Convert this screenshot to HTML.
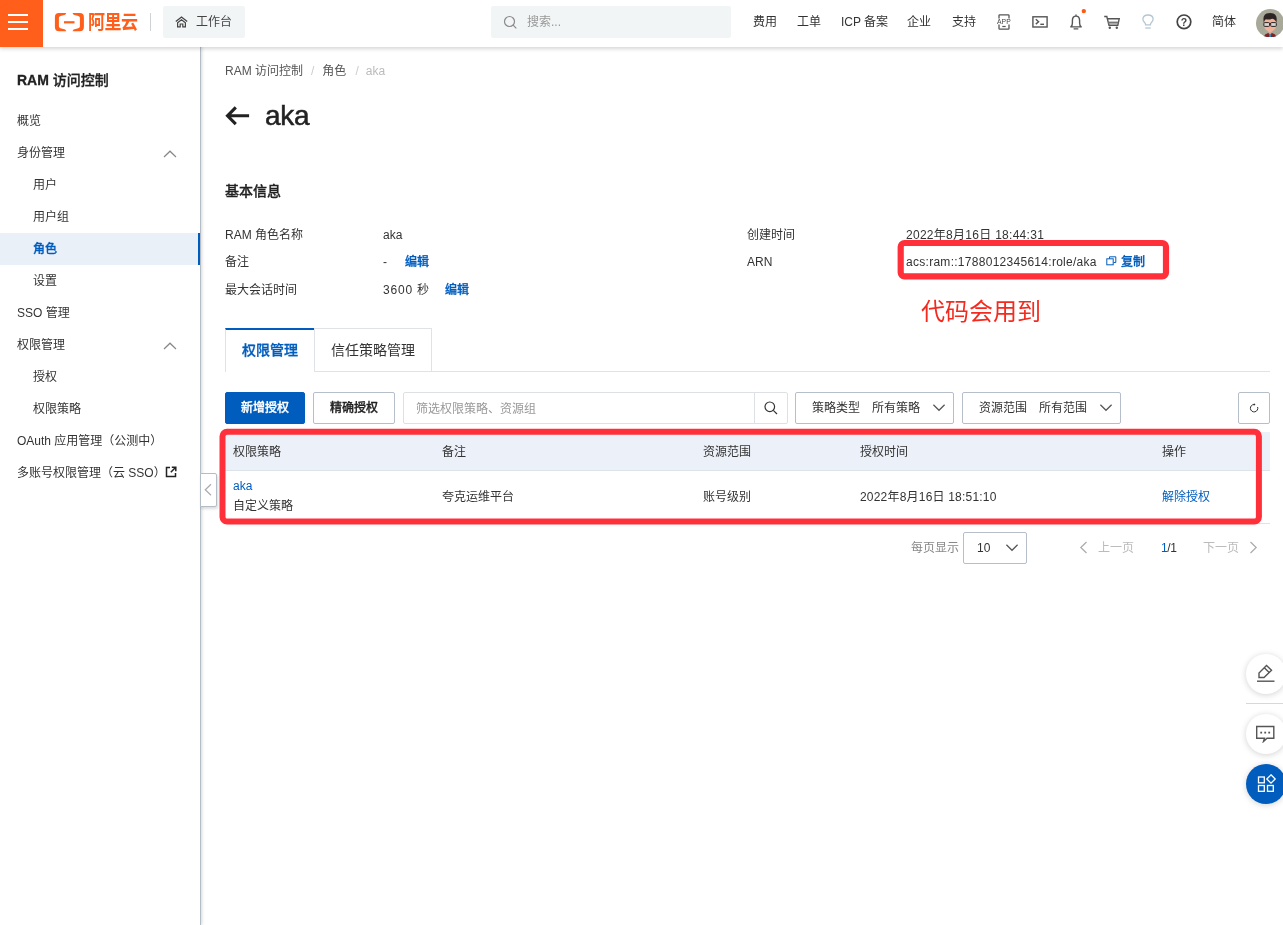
<!DOCTYPE html>
<html lang="zh-CN">
<head>
<meta charset="utf-8">
<title>RAM 访问控制</title>
<style>
*{box-sizing:border-box;margin:0;padding:0}
html,body{width:1283px;height:925px;overflow:hidden;background:#fff}
body{font-family:"Liberation Sans","Noto Sans CJK SC",sans-serif;font-size:12px;color:#333;position:relative}
#wrap{position:absolute;left:0;top:0;width:1283px;height:925px;overflow:hidden;will-change:transform}
.abs{position:absolute;white-space:nowrap}
/* header */
#hdr{position:absolute;left:0;top:0;width:1283px;height:47px;background:#fff;box-shadow:0 2px 4px rgba(0,0,0,.16);z-index:10}
#ham{position:absolute;left:0;top:0;width:43px;height:47px;background:#ff5f1b}
#ham i{position:absolute;left:8px;width:20px;height:2px;background:#fff}
.nav{position:absolute;top:0;height:46px;line-height:44px;font-size:12px;color:#333;white-space:nowrap}
/* sidebar */
#side{position:absolute;left:0;top:46px;width:201px;height:879px;background:#fff;border-right:1px solid #b4bcc5;box-shadow:1px 0 3px rgba(0,0,0,.16)}
#side .t{position:absolute;left:17px;top:24px;font-size:14px;font-weight:500;-webkit-text-stroke:.3px;color:#222;line-height:20px}
#side .m{position:absolute;left:0;width:200px;height:32px;line-height:32px;font-size:12px;color:#333;padding-left:17px;white-space:nowrap}
#side .m.s{padding-left:33px}
#side .m.a{background:#eaf0f8;color:#005dbd;font-weight:500;-webkit-text-stroke:.3px;border-right:2px solid #005dbd}
/* content */
a,.lk{color:#005dbd;text-decoration:none}
.btn{position:absolute;height:32px;line-height:31px;border:1px solid #b6bec9;border-radius:2px;background:#fff;font-size:12px;color:#333;text-align:center;white-space:nowrap}
</style>
</head>
<body>
<div id="wrap">
<div id="hdr">
<div id="ham"><i style="top:14px"></i><i style="top:21px"></i><i style="top:28px"></i></div>
<svg class="abs" style="left:54px;top:13px" width="31" height="19" viewBox="0 0 31 19"><path fill="#ff5f1b" d="M12.300 0H5Q0.900 0 0.900 4.200V14.100Q0.900 18.300 5 18.300H12.300L11.200 16.500L6.500 15.200Q4.900 14.800 4.900 13.500V4.800Q4.900 3.500 6.500 3.100L11.200 1.800Z"/><path fill="#ff5f1b" d="M18.500 0H25.800Q29.900 0 29.900 4.200V14.100Q29.900 18.300 25.800 18.300H18.500L19.600 16.500L24.300 15.200Q25.900 14.800 25.900 13.500V4.800Q25.900 3.500 24.300 3.100L19.600 1.800Z"/><rect x="10" y="8.200" width="10.500" height="2.200" fill="#ff5f1b"/></svg>
<div class="abs" style="left:88px;top:11px;font-size:17px;line-height:24px;font-weight:bold;color:#ff5f1b;letter-spacing:-0.5px;transform:scaleY(1.12);transform-origin:0 50%">阿里云</div>
<div class="abs" style="left:150px;top:13px;width:1px;height:18px;background:#d0d3d6"></div>
<div class="abs" style="left:163px;top:6px;width:82px;height:32px;background:#f2f5f6;border-radius:2px"></div>
<svg class="abs" style="left:175px;top:16px" width="13" height="12" viewBox="0 0 13 12"><path d="M0.800 5.600L6.500 1l5.700 4.600" fill="none" stroke="#444" stroke-width="1.300"/><path d="M2.600 6.800L6.500 3.700l3.900 3.100V10.800H7.800V8H5.200v2.800H2.600z" fill="none" stroke="#444" stroke-width="1.200"/></svg>
<div class="nav" style="left:196px;color:#444">工作台</div>
<div class="abs" style="left:491px;top:6px;width:240px;height:32px;background:#f2f5f6;border-radius:2px"></div>
<svg class="abs" style="left:503px;top:15px" width="15" height="15" viewBox="0 0 15 15"><circle cx="6.500" cy="6.500" r="5" fill="none" stroke="#8a8a8a" stroke-width="1.200"/><path d="M10.200 10.200L13.300 13.300" stroke="#8a8a8a" stroke-width="1.200"/></svg>
<div class="nav" style="left:527px;color:#999">搜索...</div>
<div class="nav" style="left:753px">费用</div>
<div class="nav" style="left:797px">工单</div>
<div class="nav" style="left:841px">ICP 备案</div>
<div class="nav" style="left:907px">企业</div>
<div class="nav" style="left:952px">支持</div>
<svg class="abs" style="left:995px;top:13px" width="18" height="18" viewBox="0 0 18 18"><path d="M4 5.500V2.600Q4 1.800 4.800 1.800H13.200Q14 1.800 14 2.600V5.500M14 11.500V15.400Q14 16.200 13.200 16.200H4.800Q4 16.200 4 15.400V11.500" fill="none" stroke="#555" stroke-width="1.300"/><path d="M7.300 13.500H10.700" stroke="#555" stroke-width="1.200"/><text x="9" y="11.300" font-family="Liberation Sans,sans-serif" font-size="6.800" fill="#444" text-anchor="middle" letter-spacing="0.200">APP</text></svg>
<svg class="abs" style="left:1031px;top:15px" width="18" height="14" viewBox="0 0 18 14"><rect x="1.900" y="1.800" width="14.200" height="10.200" fill="none" stroke="#555" stroke-width="1.400"/><path d="M4.800 4.300L7.600 6.700L4.800 9.100" fill="none" stroke="#555" stroke-width="1.400"/><path d="M9.300 9.300H13" stroke="#555" stroke-width="1.400"/></svg>
<svg class="abs" style="left:1069px;top:8px" width="19" height="23" viewBox="0 0 19 23"><path d="M7 6.400V8M1.200 18.900H12.800M1.900 18.900Q3.400 17.600 3.400 15V12.600Q3.400 8.100 7 8.100Q10.600 8.100 10.600 12.600V15Q10.600 17.600 12.100 18.900M4.600 20.900H9.300" fill="none" stroke="#555" stroke-width="1.400"/><circle cx="14.800" cy="3.100" r="2.200" fill="#ff5a14"/></svg>
<svg class="abs" style="left:1103px;top:14px" width="18" height="16" viewBox="0 0 18 16"><path d="M1.200 2.500H3.800L6 11.300H14.800L16.200 4.800H4.500" fill="none" stroke="#555" stroke-width="1.400"/><path d="M5.200 8.600H15.300" stroke="#777" stroke-width="2"/><circle cx="6.800" cy="13.800" r="1.200" fill="#555"/><circle cx="13.800" cy="13.800" r="1.200" fill="#555"/></svg>
<svg class="abs" style="left:1141px;top:13px" width="14" height="17" viewBox="0 0 14 17"><path d="M4.600 11.800Q4.600 10.300 3.400 9.200Q1.900 7.800 1.900 6.200Q1.900 2 7 2Q12.100 2 12.100 6.200Q12.100 7.800 10.600 9.200Q9.400 10.300 9.400 11.800Z" fill="none" stroke="#b5c6d3" stroke-width="1.300"/><path d="M4.300 15H9.700" stroke="#b5c6d3" stroke-width="1.300"/></svg>
<svg class="abs" style="left:1175px;top:13px" width="18" height="18" viewBox="0 0 18 18"><circle cx="9" cy="8.800" r="6.800" fill="none" stroke="#444" stroke-width="1.700"/><text x="9" y="12.600" font-family="Liberation Sans,sans-serif" font-size="10.500" font-weight="bold" fill="#444" text-anchor="middle">?</text></svg>

<div class="nav" style="left:1212px">简体</div>
<svg class="abs" style="left:1256px;top:8.800px" width="28.400" height="28.400" viewBox="0 0 28.400 28.400"><defs><clipPath id="av"><circle cx="14.200" cy="14.200" r="14.200"/></clipPath></defs><g clip-path="url(#av)"><rect width="28.400" height="28.400" fill="#a9a999"/><path d="M7.600 28.400Q8.500 24.800 11.500 24.300L14.100 23.800L16.700 24.300Q19.700 24.800 20.600 28.400Z" fill="#7d2426"/><path d="M12.900 25.300H15.300L14.900 28.400H13.300Z" fill="#2a8ac0"/><path d="M12.700 21.500H15.500V24.600L14.100 25.600L12.700 24.600Z" fill="#e09c86"/><path d="M8.100 11Q8.100 8 14.100 8Q20.100 8 20.100 11V17.500Q20.100 20.500 14.100 23.700Q8.100 20.500 8.100 17.500Z" fill="#efb29b"/><path d="M7.700 14Q6.300 6.500 10.500 4.600Q14 3.300 17.500 4.500Q21.800 6.200 20.500 14Q19.800 11.500 18.500 10.800Q16.500 8.800 14.200 10.400Q12.500 10.900 9.800 10.200Q8.300 11.500 7.700 14Z" fill="#2d2424"/><rect x="7.900" y="13.600" width="5.600" height="3.800" rx="0.800" fill="#d8d4d0" stroke="#2a2424" stroke-width="1"/><rect x="14.700" y="13.600" width="5.600" height="3.800" rx="0.800" fill="#d8d4d0" stroke="#2a2424" stroke-width="1"/><path d="M13.300 14.600H14.900" stroke="#2a2424" stroke-width="1.200"/></g></svg>
</div>
<div id="side">
<div class="t"><b>RAM</b> 访问控制</div>
<div class="m" style="top:59px">概览</div>
<div class="m" style="top:91px">身份管理</div>
<div class="m s" style="top:123px">用户</div>
<div class="m s" style="top:155px">用户组</div>
<div class="m s a" style="top:187px">角色</div>
<div class="m s" style="top:219px">设置</div>
<div class="m" style="top:251px">SSO 管理</div>
<div class="m" style="top:283px">权限管理</div>
<div class="m s" style="top:315px">授权</div>
<div class="m s" style="top:347px">权限策略</div>
<div class="m" style="top:379px">OAuth 应用管理（公测中）</div>
<div class="m" style="top:411px">多账号权限管理（云 SSO）</div>
<svg class="abs" style="left:163px;top:104px" width="14" height="8" viewBox="0 0 14 8"><path d="M1 7L7 1.200L13 7" fill="none" stroke="#888" stroke-width="1.200"/></svg>
<svg class="abs" style="left:163px;top:296px" width="14" height="8" viewBox="0 0 14 8"><path d="M1 7L7 1.200L13 7" fill="none" stroke="#888" stroke-width="1.200"/></svg>
<svg class="abs" style="left:165px;top:420px" width="12" height="12" viewBox="0 0 12 12"><path d="M5 1.500H1.500V10.500H10.500V7" fill="none" stroke="#222" stroke-width="1.500"/><path d="M6.800 1.200H10.800V5.200M10.500 1.500L5.800 6.200" fill="none" stroke="#222" stroke-width="1.500"/></svg>
</div>
<div class="abs" style="left:200px;top:473px;width:17px;height:34px;background:#fff;border:1px solid #b4bcc5;border-radius:0 2px 2px 0;box-shadow:1px 2px 3px rgba(0,0,0,.14)"></div>
<svg class="abs" style="left:203px;top:483px" width="10" height="14" viewBox="0 0 10 14"><path d="M8 1.200L2.300 6.700L8 12.200" fill="none" stroke="#aaa" stroke-width="1.200"/></svg>
<div id="main">
<div class="abs" style="left:225px;top:62px;line-height:18px;color:#555">RAM 访问控制<span style="color:#ccc;margin:0 8px 0 8px">/</span>角色<span style="color:#ccc;margin:0 7px 0 9px">/</span><span style="color:#bbb">aka</span></div>
<svg class="abs" style="left:224px;top:104px" width="27" height="24" viewBox="0 0 27 24"><path d="M25.100 11.800H4M11.800 3.400L3.500 11.800L11.800 20.200" fill="none" stroke="#222" stroke-width="3.100"/></svg>
<div class="abs" style="left:265px;top:98px;font-size:28px;line-height:36px;color:#222;-webkit-text-stroke:.5px;letter-spacing:-.3px">aka</div>
<div class="abs" style="left:225px;top:181px;font-size:14px;line-height:20px;font-weight:500;-webkit-text-stroke:.3px;color:#222">基本信息</div>
<div class="abs" style="left:225px;top:226px;line-height:18px">RAM 角色名称</div>
<div class="abs" style="left:383px;top:226px;line-height:18px">aka</div>
<div class="abs" style="left:225px;top:253px;line-height:18px">备注</div>
<div class="abs" style="left:383px;top:253px;line-height:18px">-</div>
<div class="abs lk" style="left:405px;top:253px;line-height:18px;font-weight:500;-webkit-text-stroke:.3px">编辑</div>
<div class="abs" style="left:225px;top:281px;line-height:18px">最大会话时间</div>
<div class="abs" style="left:383px;top:281px;line-height:18px;letter-spacing:.8px">3600 秒</div>
<div class="abs lk" style="left:445px;top:281px;line-height:18px;font-weight:500;-webkit-text-stroke:.3px">编辑</div>
<div class="abs" style="left:747px;top:226px;line-height:18px">创建时间</div>
<div class="abs" style="left:906px;top:226px;line-height:18px;letter-spacing:.28px">2022年8月16日 18:44:31</div>
<div class="abs" style="left:747px;top:253px;line-height:18px">ARN</div>
<div class="abs" style="left:906px;top:253px;line-height:18px;letter-spacing:.28px">acs:ram::1788012345614:role/aka</div>
<svg class="abs" style="left:1106px;top:256px" width="11" height="10" viewBox="0 0 11 10"><path d="M3.500 2.800V0.800H9.800V6.500H7.500" fill="none" stroke="#005dbd" stroke-width="1"/><rect x="0.800" y="2.800" width="6.400" height="6" fill="#fff" stroke="#005dbd" stroke-width="1"/></svg>
<div class="abs lk" style="left:1121px;top:253px;line-height:18px;font-weight:500;-webkit-text-stroke:.3px">复制</div>
<div class="abs" style="left:225px;top:371px;width:1045px;height:1px;background:#dfe3e7"></div>
<div class="abs" style="left:225px;top:328px;width:89px;height:44px;background:#fff;border-top:2px solid #005dbd;border-left:1px solid #dfe3e7;font-size:14px;line-height:41px;text-align:center;color:#005dbd;font-weight:500;-webkit-text-stroke:.3px">权限管理</div>
<div class="abs" style="left:314px;top:328px;width:118px;height:44px;background:#fff;border:1px solid #dfe3e7;font-size:14px;line-height:42px;text-align:center;color:#333">信任策略管理</div>
<div class="btn" style="left:225px;top:392px;width:80px;background:#005dbd;border-color:#005dbd;color:#fff;font-weight:500;-webkit-text-stroke:.3px">新增授权</div>
<div class="btn" style="left:313px;top:392px;width:82px;font-weight:500;-webkit-text-stroke:.3px;color:#222">精确授权</div>
<div class="btn" style="left:403px;top:392px;width:385px;border-color:#dde1e5;text-align:left;padding-left:12px;color:#999;line-height:32px">筛选权限策略、资源组</div>
<div class="abs" style="left:754px;top:393px;width:1px;height:30px;background:#dde1e5"></div>
<svg class="abs" style="left:763px;top:400px" width="16" height="16" viewBox="0 0 16 16"><circle cx="6.800" cy="6.800" r="4.800" fill="none" stroke="#333" stroke-width="1.200"/><path d="M10.300 10.300L14 14" stroke="#333" stroke-width="1.200"/></svg>
<div class="btn" style="left:795px;top:392px;width:159px;text-align:left;padding-left:16px">策略类型<span style="margin-left:12px">所有策略</span></div>
<svg class="abs" style="left:932px;top:403px" width="14" height="9" viewBox="0 0 14 9"><path d="M1.400 1.800L7 7.300L12.600 1.800" fill="none" stroke="#555" stroke-width="1.200"/></svg>
<div class="btn" style="left:962px;top:392px;width:159px;text-align:left;padding-left:16px">资源范围<span style="margin-left:12px">所有范围</span></div>
<svg class="abs" style="left:1099px;top:403px" width="14" height="9" viewBox="0 0 14 9"><path d="M1.400 1.800L7 7.300L12.600 1.800" fill="none" stroke="#555" stroke-width="1.200"/></svg>
<div class="btn" style="left:1238px;top:392px;width:32px"></div>
<svg class="abs" style="left:1248px;top:402px" width="12" height="12" viewBox="0 0 12 12"><path d="M6.200 2.500A3.700 3.700 0 1 0 9.600 5" fill="none" stroke="#333" stroke-width="1"/><path d="M5.900 1.300V3.700L7.500 2.500Z" fill="#333"/></svg>
<div class="abs" style="left:225px;top:432px;width:1045px;height:39px;background:#ecf0f8;border-bottom:1px solid #dde3ea"></div>
<div class="abs" style="left:225px;top:523px;width:1045px;height:1px;background:#dfe2e6"></div>
<div class="abs" style="left:233px;top:442.500px;line-height:18px">权限策略</div>
<div class="abs" style="left:442px;top:442.500px;line-height:18px">备注</div>
<div class="abs" style="left:703px;top:442.500px;line-height:18px">资源范围</div>
<div class="abs" style="left:860px;top:442.500px;line-height:18px">授权时间</div>
<div class="abs" style="left:1162px;top:442.500px;line-height:18px">操作</div>
<div class="abs lk" style="left:233px;top:477px;line-height:18px">aka</div>
<div class="abs" style="left:233px;top:497px;line-height:18px">自定义策略</div>
<div class="abs" style="left:442px;top:488px;line-height:18px">夸克运维平台</div>
<div class="abs" style="left:703px;top:488px;line-height:18px">账号级别</div>
<div class="abs" style="left:860px;top:488px;line-height:18px;letter-spacing:.2px">2022年8月16日 18:51:10</div>
<div class="abs lk" style="left:1162px;top:488px;line-height:18px">解除授权</div>
<div class="abs" style="left:911px;top:539px;line-height:18px;color:#888">每页显示</div>
<div class="btn" style="left:963px;top:532px;width:64px;text-align:left;padding-left:13px">10</div>
<svg class="abs" style="left:1005px;top:543px" width="14" height="9" viewBox="0 0 14 9"><path d="M1.400 1.800L7 7.300L12.600 1.800" fill="none" stroke="#555" stroke-width="1.200"/></svg>
<svg class="abs" style="left:1079px;top:541px" width="9" height="13" viewBox="0 0 9 13"><path d="M7.500 1L1.800 6.500L7.500 12" fill="none" stroke="#aaa" stroke-width="1.200"/></svg>
<div class="abs" style="left:1098px;top:539px;line-height:18px;color:#bbb">上一页</div>
<div class="abs" style="left:1161px;top:539px;line-height:18px;color:#333"><span class="lk" style="letter-spacing:-.4px">1</span><span style="letter-spacing:-.4px">/1</span></div>
<div class="abs" style="left:1203px;top:539px;line-height:18px;color:#bbb">下一页</div>
<svg class="abs" style="left:1249px;top:541px" width="9" height="13" viewBox="0 0 9 13"><path d="M1.500 1L7.200 6.500L1.500 12" fill="none" stroke="#aaa" stroke-width="1.200"/></svg>
<svg class="abs" style="left:0;top:0;pointer-events:none" width="1283" height="925" viewBox="0 0 1283 925"><rect x="900.700" y="243" width="265.300" height="33.300" rx="3.800" fill="none" stroke="#ff303a" stroke-width="6.200"/><rect x="222.500" y="431.800" width="1036.400" height="89.600" rx="4.500" fill="none" stroke="#ff303a" stroke-width="6"/></svg>
<div class="abs" style="left:921px;top:294px;font-size:24px;line-height:36px;color:#f42a1e">代码会用到</div>
<div class="abs" style="left:1246px;top:654px;width:40px;height:40px;border-radius:50%;background:#fff;box-shadow:0 1px 6px rgba(0,0,0,.18)"></div>
<div class="abs" style="left:1246px;top:703px;width:37px;height:1px;background:#d8d8d8"></div>
<div class="abs" style="left:1246px;top:714px;width:40px;height:40px;border-radius:50%;background:#fff;box-shadow:0 1px 6px rgba(0,0,0,.18)"></div>
<div class="abs" style="left:1246px;top:764px;width:40px;height:40px;border-radius:50%;background:#005dbd;box-shadow:0 1px 6px rgba(0,0,0,.18)"></div>
<svg class="abs" style="left:1256px;top:664px" width="20" height="19" viewBox="0 0 20 19"><path d="M1 17.200H18.500" stroke="#555" stroke-width="1.400"/><path d="M3 13.500V9L10.500 1.500L15.500 6.200L8 13.500Z" fill="none" stroke="#555" stroke-width="1.400"/><path d="M8.300 3.800L13.200 8.500" stroke="#555" stroke-width="1.400"/></svg>
<svg class="abs" style="left:1255px;top:725px" width="21" height="18" viewBox="0 0 21 18"><path d="M1.700 1.500H18.800V13.300H12L8.500 16.500L9.500 13.300H1.700Z" fill="none" stroke="#555" stroke-width="1.400"/><rect x="5.300" y="6.700" width="1.800" height="1.800" fill="#555"/><rect x="9.300" y="6.700" width="1.800" height="1.800" fill="#555"/><rect x="13.300" y="6.700" width="1.800" height="1.800" fill="#555"/></svg>
<svg class="abs" style="left:1257px;top:773px" width="20" height="20" viewBox="0 0 20 20"><rect x="1.500" y="4" width="5.800" height="5.800" fill="none" stroke="#fff" stroke-width="1.300"/><rect x="1.500" y="12.500" width="5.800" height="5.800" fill="none" stroke="#fff" stroke-width="1.300"/><rect x="10.500" y="12.500" width="5.800" height="5.800" fill="none" stroke="#fff" stroke-width="1.300"/><path d="M14 1.800L18.200 6L14 10.200L9.800 6Z" fill="none" stroke="#fff" stroke-width="1.300"/></svg>
</div>
</div>
</body>
</html>
